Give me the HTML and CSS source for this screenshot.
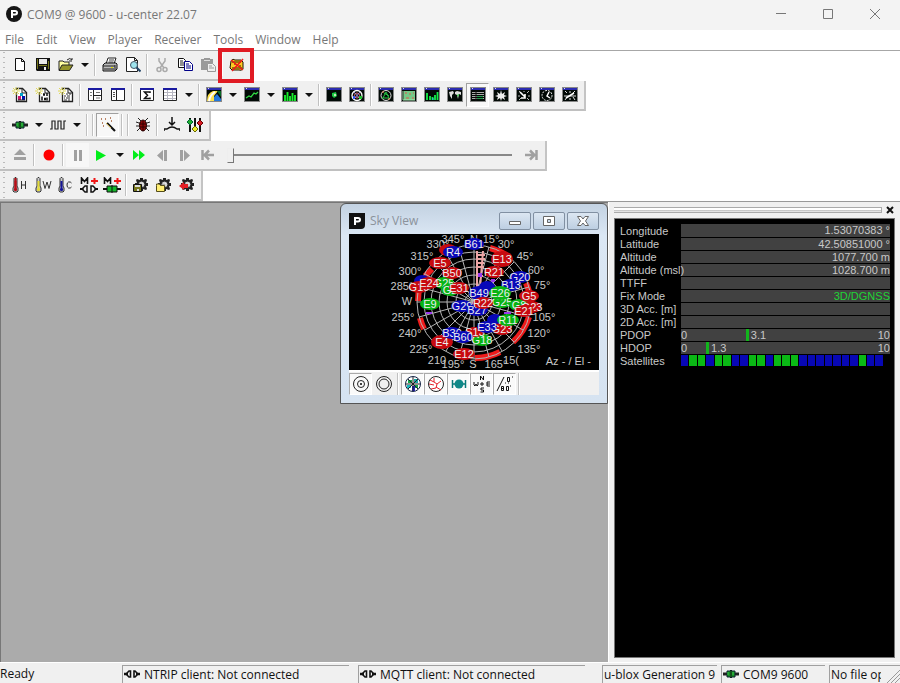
FILE: index.html
```html
<!DOCTYPE html>
<html lang="en">
<head>
<meta charset="utf-8">
<title>COM9 @ 9600 - u-center 22.07</title>
<link rel="stylesheet" href="styles.css">
</head>
<body>
<svg class="defs" aria-hidden="true">
  <defs>
    <symbol id="plogo" viewBox="0 0 16 16"><path d="M5 4h4q3 0 3 2.700t-3 2.700H7V12H5zM7 6v1.500h2q1 0 1-.8T9 6z" fill="#fff" fill-rule="evenodd"/></symbol>
    <symbol id="new" viewBox="0 0 16 16"><path d="M3.500 1.500h6l3 3v9h-9zM9.500 1.500v3h3" fill="#fff" stroke="#111"/></symbol>
    <symbol id="save" viewBox="0 0 16 16"><path d="M1 1h14v13H2l-1-1z" fill="#111"/><path d="M4 2h8v5H4z" fill="#e8e8e8"/><path d="M2 2h1v10H2zM13 4h1v8h-1zM4 8h8v1H4z" fill="#77771a"/><path d="M9 10h2v3H9z" fill="#eee"/></symbol>
    <symbol id="open" viewBox="0 0 16 16"><path d="M1 13V4h4l1 1h5v3" fill="#ffffa0" stroke="#222"/><path d="M1 13.500 4 8h11l-3.500 5.500z" fill="#94942a" stroke="#222"/><path d="M9 3q3-3 5 0V1M14 4h-3" fill="none" stroke="#222"/></symbol>
    <symbol id="print" viewBox="0 0 16 16"><path d="M4 7 6 1h8l-2 6" fill="#fff" stroke="#222"/><path d="M7 3h5M6.500 5h5" stroke="#444"/><path d="M1 8l2-2h11l1 1v5l-2 2H1z" fill="#bbb" stroke="#111"/><path d="M1 9h12M2 12h10M13 8v5" stroke="#222"/><path d="M9 10h2v1H9z" fill="#dd0"/></symbol>
    <symbol id="preview" viewBox="0 0 16 16"><path d="M1.500.5h8l3 3v11h-11zM9.500.5v3h3" fill="#fff" stroke="#222"/><circle cx="9" cy="8" r="3.500" fill="#9ee4ee" stroke="#456"/><path d="m11.500 10.500 4 4" stroke="#246" stroke-width="2"/></symbol>
    <symbol id="cut" viewBox="0 0 16 16"><g fill="none" stroke="#aaa" stroke-width="1.500"><path d="M5 1v3l5 7M11 1v3l-5 7"/><circle cx="5" cy="12.500" r="2"/><circle cx="11" cy="12.500" r="2"/></g></symbol>
    <symbol id="copy" viewBox="0 0 16 16"><g fill="#fff" stroke="#111"><path d="M1.500 1.500h5l2 2v7h-7z"/><path d="M7.500 4.500h5l3 3v6h-8z" stroke="#008"/></g><path d="M3 4h3M3 6h4M3 8h4" stroke="#222"/><path d="M9 7h3M9 9h5M9 11h5" stroke="#008"/></symbol>
    <symbol id="paste" viewBox="0 0 16 16"><path d="M1 2h3V1h6v1h3v11H1z" fill="#999"/><path d="M4 3h6v1H4z" fill="#ddd"/><path d="M7.500 6.500h5l3 3v5h-8z" fill="#eee" stroke="#999"/><path d="M9 9h3M9 11h5" stroke="#999"/></symbol>
    <symbol id="clear" viewBox="0 0 16 16"><path d="M2 4q2-3 4-1h6l2 2v7q-2 2-4 1H3l-2-2z" fill="#ffca24" stroke="#221800"/><path d="M3 5h9M3 11h10M5 7h2m3 2h2" stroke="#332100"/><path d="m2 3 12 10M14 2 3 14" stroke="#f01818" stroke-width="1.500"/></symbol>
    <symbol id="page" viewBox="0 0 16 16"><path d="M4.500 1.500h6l4 4v9h-10z" fill="#fff" stroke="#222" stroke-width="1.300"/><path d="M10 1v5h5" fill="none" stroke="#222"/><path d="M4 0v8M0 4h8M1 1l6 6M7 1 1 7" stroke="#e1d95b"/><path d="M4 3v2M3 4h2" stroke="#fff"/></symbol>
    <symbol id="pagea" viewBox="0 0 16 16"><use href="#page"/><path d="M8 6h3v3H8z" fill="#00a3c8"/><path d="M6 9h3v4H6z" fill="#d01868"/><path d="M10 9h3v4h-3z" fill="#01a"/><path d="M6 13h7" stroke="#222"/></symbol>
    <symbol id="pageb" viewBox="0 0 16 16"><use href="#page"/><path d="M7 9.500v4M12 6v3m0 1.500v3" stroke="#111" stroke-width="1.500"/><path d="M8.500 6.500h1v2h-1zM9.500 11h1v2h-1z" fill="none" stroke="#111"/></symbol>
    <symbol id="pagec" viewBox="0 0 16 16"><use href="#page"/><path d="M8 7h2m1 0h2M6 9h2m1 0h3M6 11h1m1 0h4M6 13h3m1 0h2" stroke="#333"/></symbol>
    <symbol id="frame" viewBox="0 0 16 16"><path d="M1.500 1.500h13v12h-13z" fill="#fff" stroke="#222"/><path d="M1 1h14v2H1z" fill="#1919a0"/></symbol>
    <symbol id="panes" viewBox="0 0 16 16"><use href="#frame"/><path d="M6.500 3v10M7 8.500h7" stroke="#222"/><path d="M3 5.500h2M3 8.500h2M9 5.500h4M9 11h4" stroke="#777"/></symbol>
    <symbol id="side" viewBox="0 0 16 16"><use href="#frame"/><path d="M6.500 3v10" stroke="#222"/><path d="M3 5.500h2M3 7.500h2M3 9.500h2" stroke="#555"/></symbol>
    <symbol id="sum" viewBox="0 0 16 16"><use href="#frame"/><path d="M11 6V5H5.500l3 3.200-3 3.300H11v-1" fill="none" stroke="#111" stroke-width="1.500"/></symbol>
    <symbol id="grid" viewBox="0 0 16 16"><use href="#frame"/><path d="M2 5.500h12M2 8.500h12M2 11.500h12M5.500 3v10M10.500 3v10" stroke="#b7b7c2"/></symbol>
    <symbol id="dark" viewBox="0 0 16 16"><path d="M0 0h16v15H0z" fill="#888"/><path d="M1 3h14v11H1z" fill="#020a06"/><path d="M1 1h14v2H1z" fill="#2c2cb0"/><path d="M2 1.500h1" stroke="#dde"/></symbol>
    <symbol id="map" viewBox="0 0 16 16"><use href="#dark"/><path d="M1 14q0-8 6-10h5L8 9v5z" fill="#ffe34e"/><path d="M3 14q1-6 6-9" stroke="#fff" fill="none" stroke-width="2"/><path d="m8 10 3-3 4 5v2H8z" fill="#2478dc"/><path d="M11 4h4v6z" fill="#086b24"/></symbol>
    <symbol id="line" viewBox="0 0 16 16"><use href="#dark"/><path d="m2 11 3-2 2 1 3-4 2 1 2-2" fill="none" stroke="#30d944" stroke-width="1.300"/></symbol>
    <symbol id="bars" viewBox="0 0 16 16"><use href="#dark"/><path d="M3 14V8m2.500 6V5M8 14V9m2.500 5V6M13 14V8" stroke="#19ed2d" stroke-width="1.900"/></symbol>
    <symbol id="dot" viewBox="0 0 16 16"><use href="#dark"/><path d="m6 6 4-1 1 4-3 2-2-2z" fill="#18c940"/><circle cx="9" cy="8" r="1.200" fill="#c5e8bc"/></symbol>
    <symbol id="target" viewBox="0 0 16 16"><use href="#dark"/><g fill="none" stroke="#fff"><circle cx="8" cy="8.500" r="5" stroke-width="1.300"/><circle cx="8" cy="8.500" r="2.500" stroke="#e66"/><path d="M5 5l6 7M11 5l-6 7" stroke="#98d"/></g><path d="M10 9h3v3h-3z" fill="#20c030"/><path d="M4 9h2v3H4z" fill="#35e"/></symbol>
    <symbol id="orbit" viewBox="0 0 16 16"><use href="#dark"/><g fill="none"><circle cx="8" cy="8.500" r="5" stroke="#ddd"/><path d="m5 11 3-6 3 6H4m2-5 5 3" stroke="#26c544"/><path d="M4 5h2m4 7h2" stroke="#e85"/></g></symbol>
    <symbol id="chart" viewBox="0 0 16 16"><use href="#dark"/><path d="M3 4h11v9H3z" fill="#74c887"/><path d="M4 6h2m2 1h2m2-1h1M5 11h3m3 0h2" stroke="#e5544c"/><path d="M2 4v9h12" fill="none" stroke="#a8e9b3"/></symbol>
    <symbol id="histo" viewBox="0 0 16 16"><use href="#dark"/><path d="M3 13V6m3 7V9m2.500 4v-3m2.500 3V8m2.500 5V5" stroke="#16f04b" stroke-width="1.800"/><path d="M8 12h2" stroke="#3bf"/></symbol>
    <symbol id="world" viewBox="0 0 16 16"><use href="#dark"/><path d="m2 5 4-1 1 2-2 2v4L3 9zM8 5l2-1 4 1v3l-2-1-1 5-1-4-2-1z" fill="#ddd"/><path d="m10 8 2-1-1 3z" fill="#14d82d"/></symbol>
    <symbol id="table" viewBox="0 0 16 16"><use href="#dark"/><path d="M2 5.500h12M2 7.500h12M2 9.500h12M2 11.500h12" stroke="#aaa"/><path d="M6 4v10" stroke="#111"/><path d="M7 9.500h6M7 11.500h6" stroke="#20a04b"/></symbol>
    <symbol id="compass" viewBox="0 0 16 16"><use href="#dark"/><path d="m8 3 1 4 3-2-1 3 3 1-3 1 1 3-3-2-1 3-1-3-3 2 1-3-3-1 3-1-1-3 3 2z" fill="#eee"/></symbol>
    <symbol id="gauge" viewBox="0 0 16 16"><use href="#dark"/><path d="m3 4 2 2m8-2-2 2m-9 3h2m8 0h2M3 13l2-2m8 2-2-2M8 4v1" stroke="#bbb"/><path d="m4 5 5 5M9 7v4H5" fill="none" stroke="#fff" stroke-width="1.600"/></symbol>
    <symbol id="clock" viewBox="0 0 16 16"><use href="#dark"/><circle cx="8" cy="8.500" r="5" fill="none" stroke="#eee" stroke-dasharray="2 1"/><path d="m10 5-2 4 3 2" fill="none" stroke="#fff" stroke-width="1.500"/></symbol>
    <symbol id="meter" viewBox="0 0 16 16"><use href="#dark"/><path d="m3 4 2 2m3-2v2m5-2-2 2m-9 3h12M3 13l2-3m8 3-2-3m-3 1v2" stroke="#ddd"/><path d="m4 11 8-5" stroke="#fff" stroke-width="1.500"/></symbol>
    <symbol id="plug" viewBox="0 0 16 16"><path d="M0 8h4m8 0h4" stroke="#222" stroke-width="3"/><path d="M4 5h3l1-1 1 1h3v6H9l-1 1-1-1H4z" fill="#158c24" stroke="#123"/><path d="M8 4v8" stroke="#111"/><path d="M5 6v3m5-3v3" stroke="#39ca48"/></symbol>
    <symbol id="unplug" viewBox="0 0 16 16"><path d="M0 8h4m8 0h4" stroke="#111" stroke-width="2.500"/><path d="M6.500 5H5L3 7v2l2 2h1.500zM10 5h1l2 2v2l-2 2h-1z" fill="none" stroke="#111" stroke-width="1.600"/></symbol>
    <symbol id="wave" viewBox="0 0 16 16"><path d="M0 12h2V4h3v8h3V4h3v8h3V4h2" fill="none" stroke="#222" stroke-width="1.200"/></symbol>
    <symbol id="wand" viewBox="0 0 16 16"><path d="m7 6 8 8" stroke="#111" stroke-width="2.200"/><path d="m6 6 5 5" stroke="#d6b85a"/><path d="M1 2h1m3 0h1m4-1h1M2 6h1m0 3h1m7-5h1" stroke="#a55c35" stroke-width="1.500"/></symbol>
    <symbol id="bug" viewBox="0 0 16 16"><path d="M3 1l3 3M13 1l-3 3M1 5l3 1h8l3-1M1 9h14M2 14l3-3m9 3-3-3" fill="none" stroke="#222"/><ellipse cx="8" cy="8.500" rx="3.500" ry="5.500" fill="#8d0b0b" stroke="#220000"/><path d="M8 4v10M5 7h6M5 10h6" stroke="#300"/></symbol>
    <symbol id="down" viewBox="0 0 16 16"><path d="M8 0v7M5 5l3 3 3-3M0 14v-2h3q5-4 10 0h3v2" fill="none" stroke="#111" stroke-width="1.500"/></symbol>
    <symbol id="sliders" viewBox="0 0 16 16"><path d="M3 1v14M8 1v14M13 1v14" stroke="#111" stroke-width="2"/><path d="m3 2 3 3-3 3-3-3z" fill="#20ae31" stroke="#063"/><path d="m8 9 3 3-3 3-3-3z" fill="#f1ed27" stroke="#660"/><path d="m13 3 3 3-3 3-3-3z" fill="#d91b24" stroke="#600"/></symbol>
    <symbol id="eject" viewBox="0 0 16 16"><path d="m8 2 6 6H2zM2 10h12v3H2z" fill="#a0a0a0"/></symbol>
    <symbol id="record" viewBox="0 0 16 16"><circle cx="8" cy="8" r="5.500" fill="#f00"/></symbol>
    <symbol id="pause" viewBox="0 0 16 16"><path d="M4 3h3v11H4zM9 3h3v11H9z" fill="#a0a0a0"/></symbol>
    <symbol id="play" viewBox="0 0 16 16"><path d="m3 3 10 5.500L3 14z" fill="#00ee19"/></symbol>
    <symbol id="fast" viewBox="0 0 16 16"><path d="m2 3 6 5-6 5zM8 3l6 5-6 5z" fill="#00ee19"/></symbol>
    <symbol id="back" viewBox="0 0 16 16"><path d="M9 3v11L3 8.500zM10 3h3v11h-3z" fill="#a0a0a0"/></symbol>
    <symbol id="fwd" viewBox="0 0 16 16"><path d="M3 3h3v11H3zM7 3l6 5.500L7 14z" fill="#a0a0a0"/></symbol>
    <symbol id="start" viewBox="0 0 16 16"><path d="M2.500 3v10M14 8H5m4-4.500L4.500 8 9 12.500" fill="none" stroke="#a0a0a0" stroke-width="2.500"/></symbol>
    <symbol id="finish" viewBox="0 0 16 16"><path d="M13.500 3v10M2 8h9M7 3.500 11.500 8 7 12.500" fill="none" stroke="#a0a0a0" stroke-width="2.500"/></symbol>
    <g id="thermo"><path d="M3 1.500 4 .5h1l1 1V9l1 2v3l-1 1H3l-1-1v-3l1-2z" fill="#ccc" stroke="#333"/><path d="M4.500 4v10M3 12.500h3" stroke="currentColor" stroke-width="2"/></g>
    <symbol id="hot" viewBox="0 0 18 16"><use href="#thermo"/><path d="M4.500 1v12" stroke="#b80e17" stroke-width="2"/><path d="M10.500 4v8m4-8v8m-4-4h4" stroke="#333"/></symbol>
    <symbol id="warm" viewBox="0 0 18 16"><use href="#thermo"/><path d="m9 4 2 7.500L13 5l2 6.500L17 4" fill="none" stroke="#333"/></symbol>
    <symbol id="cold" viewBox="0 0 18 16"><use href="#thermo"/><path d="M14.500 6q-1-1.500-3-1-1.500.5-1.500 3t1.500 3q2 .5 3-1" fill="none" stroke="#333"/></symbol>
    <g id="mplus"><path d="M1.500 7V1l3 3.500 3-3.500v6" fill="none" stroke="#111" stroke-width="1.600"/><path d="M11 4h7M14.500 1v6" stroke="#ef1717" stroke-width="2"/></g>
    <symbol id="mun" viewBox="0 0 18 16"><use href="#mplus"/><path d="M0 12h3m12 0h3" stroke="#111" stroke-width="2"/><path d="M7 9H5l-2 2v2l2 2h2zM11 9h2l2 2v2l-2 2h-2z" fill="none" stroke="#111" stroke-width="1.500"/></symbol>
    <symbol id="mcon" viewBox="0 0 18 16"><use href="#mplus"/><path d="M0 12h18" stroke="#111" stroke-width="2"/><path d="M4 9h10v6H4z" fill="#15b72b" stroke="#111"/><path d="M9 8v8" stroke="#111"/></symbol>
    <symbol id="gear" viewBox="0 0 16 16"><path d="M7 1h3v2l3-1 1 1-1 3h2v3h-2l1 3-1 1-3-1v2H7v-2l-3 1-1-1 1-3H2V6h2L3 3l1-1 3 1z" fill="#222"/><circle cx="8.500" cy="7.500" r="3.500" fill="#aaa" stroke="#222"/><path d="M7 6h3v3" fill="none" stroke="#fff"/></symbol>
    <symbol id="gsave" viewBox="0 0 16 16"><use href="#gear"/><path d="M.5 7.500h8v7h-8z" fill="#77771d" stroke="#111"/><path d="M2 8h5v2H2zM4 12h2v2H4z" fill="#ddd"/></symbol>
    <symbol id="gopen" viewBox="0 0 16 16"><use href="#gear"/><path d="M.5 8.500V7h3l1 1.500h4v6h-8z" fill="#ffee73" stroke="#554d19"/></symbol>
    <symbol id="gback" viewBox="0 0 16 16"><use href="#gear"/><path d="m0 9 5-4v2h4v4H5v2z" fill="#e41d24"/></symbol>
    <symbol id="drop" viewBox="0 0 8 8"><path d="M0 2h8L4 6z" fill="#111"/></symbol>
  </defs>
</svg>

<div class="app">
  <header class="titlebar">
    <span class="applogo"><svg class="ic"><use href="#plogo"/></svg></span>
    <h1>COM9 @ 9600 - u-center 22.07</h1>
    <div class="winctl">
      <button aria-label="Minimize"><svg class="wi" viewBox="0 0 12 12"><path d="M1 5.500h10"/></svg></button>
      <button aria-label="Maximize"><svg class="wi" viewBox="0 0 12 12"><path d="M1.500 1.500h9v9h-9z"/></svg></button>
      <button aria-label="Close"><svg class="wi" viewBox="0 0 12 12"><path d="m1 1 10 10M11 1 1 11"/></svg></button>
    </div>
  </header>
  <nav class="menu">
    <button>File</button><button>Edit</button><button>View</button><button>Player</button><button>Receiver</button><button>Tools</button><button>Window</button><button>Help</button>
  </nav>

  <div class="bars">
    <div class="bar" role="toolbar" aria-label="Standard">
      <button class="tb" aria-label="New"><svg class="ic"><use href="#new"/></svg></button>
      <button class="tb" aria-label="Save"><svg class="ic"><use href="#save"/></svg></button>
      <button class="tb" aria-label="Open"><svg class="ic"><use href="#open"/></svg></button>
      <button class="dd" aria-label="Recent files"><svg><use href="#drop"/></svg></button><i class="sep"></i>
      <button class="tb" aria-label="Print"><svg class="ic"><use href="#print"/></svg></button>
      <button class="tb" aria-label="Print preview"><svg class="ic"><use href="#preview"/></svg></button><i class="sep"></i>
      <button class="tb" aria-label="Cut"><svg class="ic"><use href="#cut"/></svg></button>
      <button class="tb" aria-label="Copy"><svg class="ic"><use href="#copy"/></svg></button>
      <button class="tb" aria-label="Paste"><svg class="ic"><use href="#paste"/></svg></button><i class="sep"></i>
      <button class="tb marked" aria-label="Clear"><svg class="ic"><use href="#clear"/></svg></button>
    </div>

    <div class="bar" role="toolbar" aria-label="Views">
      <button class="tb" aria-label="Packet console"><svg class="ic"><use href="#pagea"/></svg></button>
      <button class="tb" aria-label="Binary console"><svg class="ic"><use href="#pageb"/></svg></button>
      <button class="tb" aria-label="Text console"><svg class="ic"><use href="#pagec"/></svg></button><i class="sep"></i>
      <button class="tb" aria-label="Messages"><svg class="ic"><use href="#panes"/></svg></button>
      <button class="tb" aria-label="Configuration"><svg class="ic"><use href="#side"/></svg></button><i class="sep"></i>
      <button class="tb" aria-label="Statistics"><svg class="ic"><use href="#sum"/></svg></button>
      <button class="tb" aria-label="Table"><svg class="ic"><use href="#grid"/></svg></button>
      <button class="dd" aria-label="Table list"><svg><use href="#drop"/></svg></button><i class="sep"></i>
      <button class="tb" aria-label="Map"><svg class="ic"><use href="#map"/></svg></button>
      <button class="dd" aria-label="Map list"><svg><use href="#drop"/></svg></button>
      <button class="tb" aria-label="Chart"><svg class="ic"><use href="#line"/></svg></button>
      <button class="dd" aria-label="Chart list"><svg><use href="#drop"/></svg></button>
      <button class="tb" aria-label="Histogram"><svg class="ic"><use href="#bars"/></svg></button>
      <button class="dd" aria-label="Histogram list"><svg><use href="#drop"/></svg></button><i class="sep"></i>
      <button class="tb" aria-label="Camera"><svg class="ic"><use href="#dot"/></svg></button>
      <button class="tb" aria-label="Deviation"><svg class="ic"><use href="#target"/></svg></button><i class="sep"></i>
      <button class="tb" aria-label="Sky view"><svg class="ic"><use href="#orbit"/></svg></button>
      <button class="tb" aria-label="Satellite position"><svg class="ic"><use href="#chart"/></svg></button>
      <button class="tb" aria-label="Satellite level"><svg class="ic"><use href="#histo"/></svg></button>
      <button class="tb" aria-label="World position"><svg class="ic"><use href="#world"/></svg></button>
      <button class="tb on" aria-label="Data"><svg class="ic"><use href="#table"/></svg></button>
      <button class="tb" aria-label="Compass"><svg class="ic"><use href="#compass"/></svg></button>
      <button class="tb" aria-label="Speed"><svg class="ic"><use href="#gauge"/></svg></button>
      <button class="tb" aria-label="Clock"><svg class="ic"><use href="#clock"/></svg></button>
      <button class="tb" aria-label="Altitude"><svg class="ic"><use href="#meter"/></svg></button>
    </div>

    <div class="bar" role="toolbar" aria-label="Communication">
      <button class="tb" aria-label="Port"><svg class="ic"><use href="#plug"/></svg></button>
      <button class="dd" aria-label="Port list"><svg><use href="#drop"/></svg></button>
      <button class="tb" aria-label="Baud rate"><svg class="ic"><use href="#wave"/></svg></button>
      <button class="dd" aria-label="Baud rate list"><svg><use href="#drop"/></svg></button><i class="sep"></i><i class="sep"></i>
      <button class="tb on" aria-label="Autobauding"><svg class="ic"><use href="#wand"/></svg></button><i class="sep"></i><i class="sep"></i>
      <button class="tb" aria-label="Debug"><svg class="ic"><use href="#bug"/></svg></button><i class="sep"></i>
      <button class="tb" aria-label="Download"><svg class="ic"><use href="#down"/></svg></button>
      <button class="tb" aria-label="Settings"><svg class="ic"><use href="#sliders"/></svg></button>
    </div>

    <div class="bar" role="toolbar" aria-label="Player">
      <button class="tb" aria-label="Eject"><svg class="ic"><use href="#eject"/></svg></button><i class="sep"></i>
      <button class="tb" aria-label="Record"><svg class="ic"><use href="#record"/></svg></button><i class="sep"></i>
      <button class="tb lit" aria-label="Pause"><svg class="ic"><use href="#pause"/></svg></button>
      <button class="tb" aria-label="Play"><svg class="ic"><use href="#play"/></svg></button>
      <button class="dd" aria-label="Play speed"><svg><use href="#drop"/></svg></button>
      <button class="tb" aria-label="Fast forward"><svg class="ic"><use href="#fast"/></svg></button>
      <button class="tb" aria-label="Step back"><svg class="ic"><use href="#back"/></svg></button>
      <button class="tb" aria-label="Step forward"><svg class="ic"><use href="#fwd"/></svg></button>
      <button class="tb" aria-label="To start"><svg class="ic"><use href="#start"/></svg></button>
      <input class="seek" type="range" min="0" max="100" value="0" aria-label="Position">
      <button class="tb" aria-label="To end"><svg class="ic"><use href="#finish"/></svg></button>
    </div>

    <div class="bar" role="toolbar" aria-label="Receiver actions">
      <button class="tb hot" aria-label="Hot start"><svg class="ic wide"><use href="#hot"/></svg></button>
      <button class="tb warm" aria-label="Warm start"><svg class="ic wide"><use href="#warm"/></svg></button>
      <button class="tb cold" aria-label="Cold start"><svg class="ic wide"><use href="#cold"/></svg></button>
      <button class="tb" aria-label="MQTT settings"><svg class="ic wide"><use href="#mun"/></svg></button>
      <button class="tb" aria-label="MQTT connect"><svg class="ic wide"><use href="#mcon"/></svg></button><i class="sep"></i>
      <button class="tb" aria-label="Save configuration"><svg class="ic"><use href="#gsave"/></svg></button>
      <button class="tb" aria-label="Load configuration"><svg class="ic"><use href="#gopen"/></svg></button>
      <button class="tb" aria-label="Revert configuration"><svg class="ic"><use href="#gback"/></svg></button>
    </div>
  </div>

  <main class="work">
    <div class="mdi">
      <section class="child">
        <header class="childbar">
          <span class="childlogo"><svg class="ic"><use href="#plogo"/></svg></span>
          <h2>Sky View</h2>
          <button aria-label="Minimize"><svg viewBox="0 0 16 12"><path d="M2.500 6.500h11v3h-11z"/></svg></button>
          <button aria-label="Maximize"><svg viewBox="0 0 16 12"><path d="M2.500 1.500h11v9h-11zM6.500 4.500h3v3h-3z"/></svg></button>
          <button aria-label="Close"><svg viewBox="0 0 16 12"><path d="M2.500 1.500h3.500L8 4l2-2.500h3.500L10.500 6l3 4.500H10L8 8l-2 2.500H2.500L5.500 6z"/></svg></button>
        </header>
        <svg class="sky" viewBox="0 0 250 136" role="img" aria-label="Satellites in the sky">
          <rect width="250" height="136"/>
          <g class="band">
            <path d="M141 14A57 57 0 0 1 161 24M177 49A57 57 0 0 1 182 70M180 83A57 57 0 0 1 164 108M151 118A57 57 0 0 1 126 124M75 95A57 57 0 0 1 71 84M69 67A57 57 0 0 1 71 52M76 42l7-7"/>
          </g>
          <g class="net">
            <circle cx="125" cy="68" r="57"/><circle cx="125" cy="68" r="50"/><circle cx="125" cy="68" r="43"/><circle cx="125" cy="68" r="35"/><circle cx="125" cy="68" r="27"/><circle cx="125" cy="68" r="18"/><circle cx="125" cy="68" r="9"/>
            <path d="M125 11v114M68 68h114M110 13l30 110M97 19l56 98M85 28l80 80M76 40l98 56M70 53l110 30M140 13l-30 110M153 19l-56 98M165 28l-80 80M174 40 76 96M180 53 70 83"/>
          </g>
          <path class="trail" d="M128 17v38M134 17l-3 38M127 21h9M127 25h9M127 29h8M127 33h8M127 42h7"/>
          <path class="violet" d="M129 39h4v4h-4zM77 78h6v2h-6zM155 78h7v2h-7zM142 45h4v3h-4z"/>
          <g class="deg">
            <text x="104" y="9">345°</text><text x="125" y="9">N</text><text x="142" y="9">15°</text><text x="157" y="14">30°</text><text x="176" y="26">45°</text><text x="187" y="40">60°</text><text x="193" y="55">75°</text><text x="195" y="87">105°</text><text x="190" y="103">120°</text><text x="180" y="119">135°</text><text x="162" y="130">15(</text><text x="147" y="134">165°</text><text x="124" y="134">S</text><text x="104" y="134">195°</text><text x="88" y="130">210</text><text x="72" y="119">225°</text><text x="61" y="103">240°</text><text x="54" y="87">255°</text><text x="58" y="71">W</text><text x="53" y="56">285°</text><text x="61" y="41">300°</text><text x="73" y="26">315°</text><text x="89" y="14">330°</text>
            <text class="azel" x="242" y="131">Az - / El -</text>
          </g>
          <g class="r"><ellipse cx="99" cy="16" rx="9" ry="6"/></g>
          <g class="b"><ellipse cx="73" cy="47" rx="8" ry="6"/><ellipse cx="138" cy="53" rx="8" ry="6"/><ellipse cx="146" cy="86" rx="8" ry="6"/></g>
          <g class="g"><ellipse cx="95" cy="49" rx="10" ry="6"/><text x="95" y="53">G25</text><ellipse cx="101" cy="56" rx="9" ry="6"/><text x="101" y="60">G2</text></g>
          <g class="r"><ellipse cx="70" cy="53" rx="10" ry="6"/><text x="70" y="57">G19</text></g>
          <g class="b"><ellipse cx="104" cy="18" rx="10" ry="6"/><text x="104" y="22">R4</text><ellipse cx="125" cy="10" rx="10" ry="6"/><text x="125" y="14">B61</text><ellipse cx="171" cy="43" rx="10" ry="6"/><text x="171" y="47">G20</text><ellipse cx="162" cy="51" rx="10" ry="6"/><text x="162" y="55">B13</text><ellipse cx="130" cy="59" rx="10" ry="7"/><text x="130" y="63">B49</text><ellipse cx="113" cy="72" rx="11" ry="6"/><text x="113" y="76">G29</text><ellipse cx="128" cy="76" rx="11" ry="6"/><text x="128" y="80">B27</text></g>
          <g class="g"><ellipse cx="153" cy="68" rx="10" ry="6"/><text x="153" y="72">G25</text><ellipse cx="151" cy="59" rx="11" ry="7"/><text x="151" y="63">E26</text><ellipse cx="170" cy="71" rx="10" ry="6"/><text x="170" y="75">G8</text><ellipse cx="81" cy="70" rx="10" ry="6"/><text x="81" y="74">E9</text><ellipse cx="133" cy="106" rx="10" ry="6"/><text x="133" y="110">G18</text></g>
          <g class="r"><ellipse cx="153" cy="25" rx="11" ry="8"/><text x="153" y="29">E13</text><ellipse cx="91" cy="29" rx="11" ry="6"/><text x="91" y="33">E5</text><ellipse cx="103" cy="39" rx="10" ry="6"/><text x="103" y="43">B50</text><ellipse cx="145" cy="38" rx="10" ry="6"/><text x="145" y="42">R21</text><ellipse cx="80" cy="49" rx="10" ry="6"/><text x="80" y="53">E24</text><ellipse cx="110" cy="54" rx="10" ry="6"/><text x="110" y="58">E31</text><ellipse cx="180" cy="62" rx="10" ry="6"/><text x="180" y="66">G5</text><ellipse cx="183" cy="73" rx="9" ry="6"/><text x="183" y="77">G23</text><ellipse cx="175" cy="77" rx="10" ry="6"/><text x="175" y="81">E21</text><ellipse cx="134" cy="69" rx="10" ry="6"/><text x="134" y="73">R22</text><ellipse cx="153" cy="95" rx="10" ry="6"/><text x="153" y="99">G23</text><ellipse cx="126" cy="98" rx="9" ry="5"/><text x="126" y="102">S13</text><ellipse cx="93" cy="108" rx="11" ry="7"/><text x="93" y="112">E4</text><ellipse cx="115" cy="120" rx="11" ry="6"/><text x="115" y="124">E12</text></g>
          <g class="b"><ellipse cx="103" cy="99" rx="10" ry="6"/><text x="103" y="103">B30</text><ellipse cx="114" cy="103" rx="10" ry="6"/><text x="114" y="107">B60</text><ellipse cx="138" cy="93" rx="10" ry="6"/><text x="138" y="97">E33</text></g>
          <g class="g"><ellipse cx="159" cy="86" rx="11" ry="6"/><text x="159" y="90">R11</text></g>
        </svg>
        <footer class="skytools">
          <button class="st on" aria-label="Rings"><svg viewBox="0 0 18 18"><g fill="none" stroke="#222"><circle cx="9" cy="9" r="7.500"/><circle cx="9" cy="9" r="3.500"/></g><circle cx="9" cy="9" r="1"/></svg></button>
          <button class="st" aria-label="Outer rings"><svg viewBox="0 0 18 18"><g fill="none" stroke="#222"><circle cx="9" cy="9" r="7.500"/><circle cx="9" cy="9" r="5"/></g></svg></button>
          <i class="sep"></i>
          <button class="st on" aria-label="Satellites"><svg viewBox="0 0 18 18"><circle cx="9" cy="9" r="7.500" fill="#fff" stroke="#124"/><path d="M4 5h4v3H4zM10 10h4v3h-4z" fill="#12a64a"/><path d="M10 4h4v4h-4z" fill="#16a7a7"/><path d="M8 11h3v5H8z" fill="#2222bb"/><path d="M3 10h4v3H3z" fill="#1bbac0"/><path d="M9 2v14M2 9h14M4 4l10 10M14 4 4 14" stroke="#222"/></svg></button>
          <button class="st on" aria-label="Tracks"><svg viewBox="0 0 18 18"><circle cx="9" cy="9" r="7.500" fill="#fff" stroke="#222"/><path d="m3 5 4 2 3 2 4-3M7 7V3M10 9l-1 4-5 1M9 12l5 3M2 9l5 1" fill="none" stroke="#e51f29"/></svg></button>
          <button class="st on" aria-label="Satellite size"><svg viewBox="0 0 18 18"><path d="M2.500 5v8M15.500 5v8M2 9h14" stroke="#087a7a" stroke-width="1.500"/><circle cx="9" cy="9" r="4.500" fill="#108888"/></svg></button>
          <button class="st on" aria-label="Directions"><svg viewBox="0 0 18 18"><path d="M7.500 5V1l3 4V1M1 7v3l1 1 1-2 1 2 1-1V7M17 7h-3v4h3m-3-2h3M9 7v4M7 9h4M11 13H8v2h2.500v2H7.500" fill="none" stroke="#111"/></svg></button>
          <button class="st on" aria-label="Degrees"><svg viewBox="0 0 18 18"><path d="M1 16 8 2M11.500 2.500h2v4h-2zM5.500 11.500h2v4h-2zM10.500 11.500h2v4h-2zM5.500 13.500h2M16 2h1M14 11h1M9 8h1m2 0h1" fill="none" stroke="#111"/></svg></button>
          <i class="sep"></i>
        </footer>
      </section>
    </div>

    <aside class="dock">
      <header class="grip"><span></span><button aria-label="Close panel"><svg viewBox="0 0 8 8"><path d="m1 1 6 6M7 1 1 7"/></svg></button></header>
      <div class="data">
        <table>
          <tr><th scope="row">Longitude</th><td>1.53070383 °</td></tr>
          <tr><th scope="row">Latitude</th><td>42.50851000 °</td></tr>
          <tr><th scope="row">Altitude</th><td>1077.700 m</td></tr>
          <tr><th scope="row">Altitude (msl)</th><td>1028.700 m</td></tr>
          <tr><th scope="row">TTFF</th><td></td></tr>
          <tr><th scope="row">Fix Mode</th><td class="fix">3D/DGNSS</td></tr>
          <tr><th scope="row">3D Acc. [m]</th><td></td></tr>
          <tr><th scope="row">2D Acc. [m]</th><td></td></tr>
          <tr><th scope="row">PDOP</th><td><div class="dop"><span class="from" style="width:31%">0</span><span class="val">3.1</span><span>10</span></div></td></tr>
          <tr><th scope="row">HDOP</th><td><div class="dop"><span class="from" style="width:12%">0</span><span class="val">1.3</span><span>10</span></div></td></tr>
          <tr><th scope="row">Satellites</th><td class="sats"><div><i></i><i class="u"></i><i class="u"></i><i></i><i class="u"></i><i class="u"></i><i></i><i></i><i class="u"></i><i class="u"></i><i></i><i class="u"></i><i class="u"></i><i class="u"></i><i></i><i></i><i></i><i></i><i></i><i></i><i></i><i class="u"></i><i></i><i></i></div></td></tr>
        </table>
      </div>
    </aside>
  </main>

  <footer class="status">
    <span class="ready">Ready</span>
    <span class="cell c1"><svg class="ic"><use href="#unplug"/></svg>NTRIP client: Not connected</span>
    <span class="cell c2"><svg class="ic"><use href="#unplug"/></svg>MQTT client: Not connected</span>
    <span class="cell c3">u-blox Generation 9</span>
    <span class="cell c4"><svg class="ic"><use href="#plug"/></svg>COM9 9600</span>
    <span class="cell c5"><span>No file open</span></span>
    <svg class="size" viewBox="0 0 14 14"><path d="M1 14 14 1M5 14l9-9M9 14l5-5"/></svg>
  </footer>
</div>
</body>
</html>
```

FILE: styles.css
```css
* { box-sizing: border-box; }
body { margin: 0; font: 12px "Open Sans", "Noto Sans", sans-serif; color: #111; background: #fff; }
button { border: 0; padding: 0; margin: 0; background: none; font: inherit; color: inherit; }
h1, h2 { margin: 0; font-size: 12px; font-weight: 400; }
svg { display: block; }
.defs { position: absolute; width: 0; height: 0; }
.ic { width: 16px; height: 16px; flex: none; }
.wide { width: 18px; }

.app { display: flex; flex-direction: column; height: 100vh; overflow: hidden; }
.titlebar { display: flex; align-items: center; height: 30px; flex: none; padding: 0 2px 2px 6px; gap: 5px; background: #f3f3f3; color: #777; }
.applogo { border-radius: 50%; background: #151515; }
.winctl { display: flex; margin-left: auto; }
.winctl button { width: 47px; height: 28px; display: grid; place-items: center; }
.wi { width: 12px; height: 12px; fill: none; stroke: #777; }
.menu { display: flex; height: 20px; flex: none; padding: 0 0 2px 5px; gap: 12px; align-items: center; color: #777; background: #fff; }

.bars { flex: none; background: #fff; border-top: 1px solid #a7a7a7; }
.bar { display: flex; align-items: center; width: fit-content; height: 30px; padding: 0 3px 0 8px; background: #f0f0f0; border-right: 2px solid #c4c4c4; border-bottom: 2px solid #c0c0c0; background-image: radial-gradient(circle, #bbb 1px, transparent 1px); background-size: 4px 5px; background-repeat: repeat-y; background-position: 2px 4px; }
.tb { width: 23px; height: 24px; display: grid; place-items: center; position: relative; }
.tb.on { background: #f8f8f8; border: 1px solid; border-color: #a0a0a0 #fff #fff #a0a0a0; }
.tb.lit { background: #f7f7f7; }
.tb.marked::after { content: ""; position: absolute; inset: -5px -6px -6px -7px; border: 4px solid #e01b24; z-index: 2; }
.dd { width: 15px; height: 24px; display: grid; place-items: center; }
.dd svg { width: 8px; height: 8px; }
.sep { width: 2px; height: 22px; margin: 0 2px; background: #c0c0c0; border-right: 1px solid #fff; flex: none; }
.hot { color: #b80e17; }
.warm { color: #e4dc39; }
.cold { color: #171798; }
.seek { appearance: none; width: 285px; height: 20px; margin: 0 7px 0 8px; background: linear-gradient(#888, #888) center / 100% 2px no-repeat; }
.seek::-webkit-slider-thumb { appearance: none; width: 7px; height: 15px; background: #f0f0f0; border: 1px solid; border-color: #eee #777 #777 #eee; }

.work { display: grid; grid-template-columns: minmax(0, 1fr) 292px; flex: 1; min-height: 0; border-top: 1px solid #999; }
.mdi { background: #ababab; position: relative; border-left: 1px solid #777; border-top: 1px solid #777; overflow: hidden; }
.child { position: absolute; right: 0; top: 0; width: 268px; padding: 0 8px 8px 8px; border: 1px solid #555; border-radius: 6px 6px 0 0; background: linear-gradient(#c3d2e2, #dbe7f4 32px, #d6e3f1); }
.childbar { display: flex; align-items: center; height: 30px; padding-top: 3px; gap: 2px; color: #8b929b; }
.childlogo { background: #111; border-radius: 0 0 4px 0; }
.childbar h2 { flex: 1; padding-left: 3px; }
.childbar button { width: 32px; height: 18px; display: grid; place-items: center; border: 1px solid #8190a2; border-radius: 2px; background: linear-gradient(#dce7f2, #bdcfe2); }
.childbar button svg { width: 16px; height: 12px; fill: #fff; stroke: #666; fill-rule: evenodd; }
.sky { width: 100%; }
.sky text { font: 11px "Liberation Sans", sans-serif; text-anchor: middle; fill: #eee; }
.sky .deg text { fill: #c8c8c8; }
.sky .deg .azel { text-anchor: end; }
.net { fill: none; stroke: #b5b5b5; }
.band { fill: none; stroke: #ee1b1b; stroke-width: 6; }
.trail { fill: none; stroke: #eca6a6; stroke-width: 2; }
.violet { fill: #9c38ef; }
.r ellipse { fill: #c80a10; }
.b ellipse { fill: #0808b8; }
.g ellipse { fill: #08b414; }
.skytools { display: flex; align-items: center; height: 25px; background: #f0f0f0; border-top: 2px solid #fff; }
.st { width: 23px; height: 22px; display: grid; place-items: center; }
.st.on { background: #fafafa; border: 1px solid; border-color: #aaa #fff #fff #aaa; }
.st svg { width: 18px; height: 18px; }

.dock { background: #f0f0f0; padding: 2px 5px 4px 5px; display: flex; flex-direction: column; border-left: 1px solid #fff; }
.grip { display: flex; align-items: center; height: 12px; gap: 4px; flex: none; margin-bottom: 2px; }
.grip span { flex: 1; height: 6px; border: solid #aaa; border-width: 1px 1px 1px 0; background: linear-gradient(#fff 50%, #bbb 50%, #f0f0f0); }
.grip button { width: 9px; }
.grip svg { width: 8px; height: 8px; stroke: #111; stroke-width: 2; }
.data { flex: 1; background: #000; border: 1px solid #777; padding: 5px 4px 0 5px; }
.data table { width: 100%; border-collapse: collapse; table-layout: fixed; font: 11px/12px "Liberation Sans", sans-serif; color: #c8c8c8; }
.data th { width: 61px; padding: 0; font-weight: 400; text-align: left; white-space: nowrap; }
.data td { height: 13px; padding: 0; background: #414141; border-bottom: 1px solid #000; text-align: right; }
.data .fix { color: #20d335; }
.dop { display: flex; }
.dop .from { text-align: left; }
.dop .val { flex: 1; text-align: left; border-left: 3px solid #12b51c; padding-left: 2px; }
.data .sats { background: #000; padding-right: 7px; }
.sats div { display: flex; gap: 1px; }
.sats i { flex: 1; height: 11px; background: #0707b5; }
.sats .u { background: #0ab915; }

.status { display: flex; align-items: center; height: 21px; flex: none; gap: 4px; padding-top: 1px; background: #f0f0f0; border-top: 1px solid #fff; position: relative; }
.ready { width: 118px; }
.cell { display: flex; align-items: center; gap: 4px; height: 18px; border-top: 1px solid #a0a0a0; border-left: 1px solid #a0a0a0; white-space: nowrap; overflow: hidden; padding-left: 1px; }
.c1 { width: 227px; }
.c2 { width: 227px; margin-left: 5px; }
.c3 { width: 115px; margin-left: auto; }
.c4 { width: 104px; }
.c5 { width: 71px; }
.c5 span { width: 50px; overflow: hidden; }
.size { position: absolute; right: 0; bottom: 0; width: 14px; height: 14px; stroke: #999; }
```
